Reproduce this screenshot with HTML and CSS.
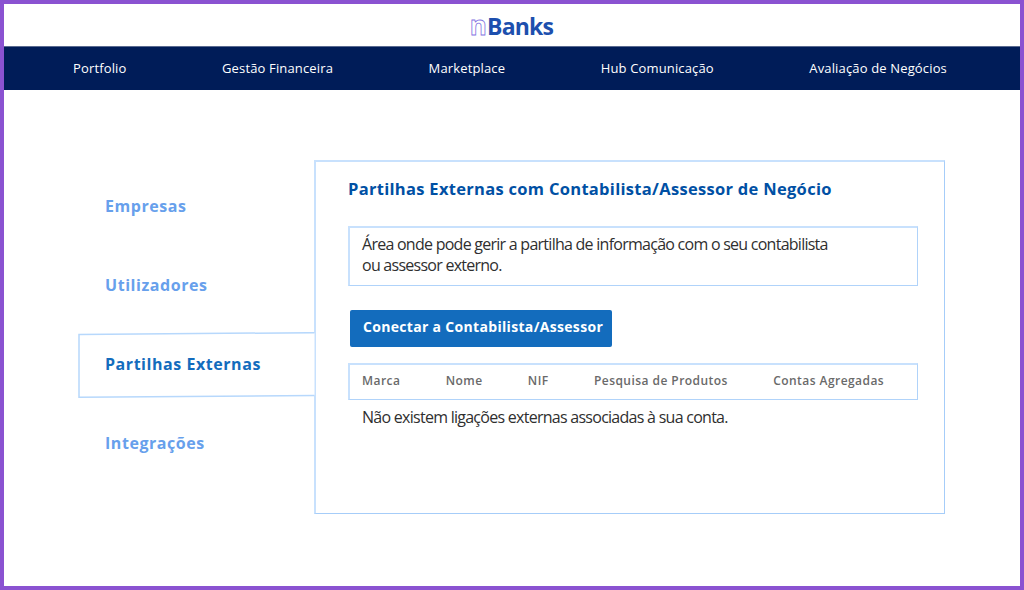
FILE: index.html
```html
<!DOCTYPE html>
<html lang="pt">
<head>
  <meta charset="UTF-8">
  <meta name="viewport" content="width=device-width, initial-scale=1.0">
  <title>nBanks</title>
  <link rel="stylesheet" href="styles.css">
</head>
<body>
  <div class="frame">
    <header class="top">
      <div class="logo"><span class="logo-n">n</span>Banks</div>
    </header>

    <nav class="nav">
      <a>Portfolio</a>
      <a>Gestão Financeira</a>
      <a>Marketplace</a>
      <a>Hub Comunicação</a>
      <a>Avaliação de Negócios</a>
    </nav>

    <main class="main">
      <ul class="side">
        <li class="side-item">Empresas</li>
        <li class="side-item">Utilizadores</li>
        <li class="side-item active">
          <svg class="tab-shape" width="238" height="68" viewBox="0 0 238 68">
            <path d="M236.5 .7 1 2.4V65.2L236.5 63.6" fill="#fff" stroke="#b7d8fc" stroke-width="1.5"/>
          </svg>
          <span class="tab-label">Partilhas Externas</span>
        </li>
        <li class="side-item">Integrações</li>
      </ul>

      <section class="panel">
        <h1 class="title">Partilhas Externas com Contabilista/Assessor de Negócio</h1>
        <p class="info">Área onde pode gerir a partilha de informação com o seu contabilista<br>ou assessor externo.</p>
        <button class="btn">Conectar a Contabilista/Assessor</button>
        <div class="table-head">
          <span>Marca</span>
          <span>Nome</span>
          <span>NIF</span>
          <span>Pesquisa de Produtos</span>
          <span>Contas Agregadas</span>
        </div>
        <p class="empty">Não existem ligações externas associadas à sua conta.</p>
      </section>
    </main>
  </div>
</body>
</html>
```

FILE: styles.css
```css
* {
  box-sizing: border-box;
}
html, body {
  margin: 0;
  padding: 0;
}
body {
  font-family: "Open Sans", Arial, sans-serif;
  background-color: #fff;
  overflow: hidden;
}
.frame {
  width: 1024px;
  height: 590px;
  border: 4px solid #8a52d1;
  overflow: hidden;
}
.top {
  height: 42px;
  display: flex;
  justify-content: center;
  padding-right: 1px;
}
.logo {
  font-size: 23px;
  font-weight: 700;
  letter-spacing: -0.8px;
  color: #1d4fae;
  line-height: 42px;
  height: 41px;
}
.logo-n {
  color: #fff;
  font-size: 26px;
  -webkit-text-stroke: 0.8px #8474e2;
  margin-right: 1px;
}
.nav {
  height: 44px;
  background-color: #001c58;
  border-top: 1px solid #5a6a90;
  display: flex;
  align-items: center;
  justify-content: space-between;
  padding: 0 73px 2px 69px;
  color: #fff;
  font-size: 13px;
  letter-spacing: 0.15px;
}
.main {
  display: flex;
  padding: 70px 0 0 74px;
}
.side {
  list-style: none;
  margin: 0;
  padding: 14px 0 0;
  width: 236px;
  position: relative;
  z-index: 1;
  display: flex;
  flex-direction: column;
  gap: 14px;
}
.side-item {
  position: relative;
  height: 65px;
  line-height: 65px;
  padding-left: 27px;
  font-size: 16px;
  font-weight: 700;
  letter-spacing: 0.55px;
  color: #67a0ec;
}
.side-item.active {
  color: #136cbd;
}
.tab-shape {
  position: absolute;
  left: 0;
  top: 0;
}
.tab-label {
  position: relative;
}
.panel {
  width: 631px;
  height: 354px;
  border-style: solid;
  border-width: 2px 1px 1px 2px;
  border-color: #c8e1fd #a6cdf9 #a6cdf9 #c8e1fd;
  padding: 15px 26px 0 32px;
}
.title {
  margin: 0;
  font-size: 16.5px;
  line-height: 24px;
  font-weight: 700;
  letter-spacing: 0.3px;
  color: #0050a4;
}
.info {
  margin: 25px 0 0;
  height: 60px;
  padding: 6px 14px 0 12px;
  border-style: solid;
  border-width: 2px 1px 1px 2px;
  border-color: #c8e1fd #b0d3fa #b0d3fa #c8e1fd;
  font-size: 16px;
  line-height: 21px;
  letter-spacing: -0.74px;
  color: #2f2f2f;
}
.btn {
  display: block;
  margin: 24px 0 0 2px;
  width: 262px;
  height: 37px;
  padding: 0 0 5px 4px;
  border: none;
  border-radius: 2px;
  background-color: #136cbd;
  color: #fff;
  font-family: inherit;
  font-size: 14px;
  font-weight: 700;
  letter-spacing: 0.32px;
}
.table-head {
  margin-top: 16px;
  height: 37px;
  border-style: solid;
  border-width: 2px 1px 1px 2px;
  border-color: #c8e1fd #b0d3fa #b0d3fa #c8e1fd;
  padding: 0 0 3px 12px;
  display: flex;
  align-items: center;
  gap: 45.3px;
  font-size: 12px;
  font-weight: 600;
  letter-spacing: 0.45px;
  color: #6a6a6a;
}
.empty {
  margin: 6px 0 0 14px;
  font-size: 16px;
  line-height: 22px;
  letter-spacing: -0.73px;
  color: #2f2f2f;
}
```
